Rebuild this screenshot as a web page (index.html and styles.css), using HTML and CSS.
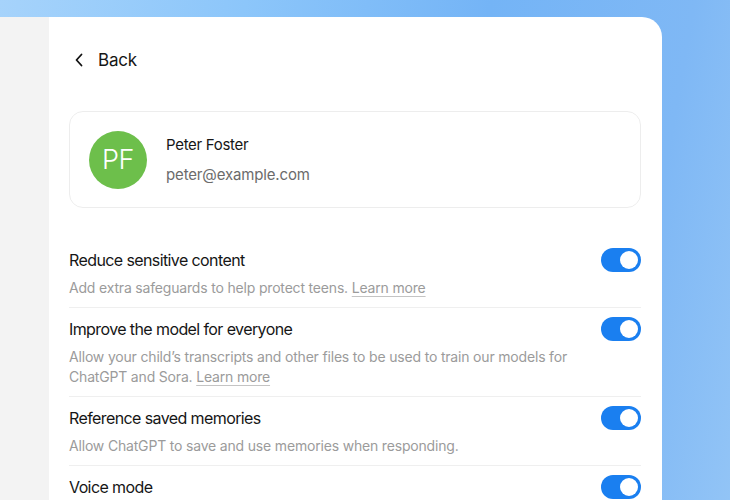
FILE: index.html
```html
<!DOCTYPE html>
<html lang="en">
<head>
<meta charset="utf-8">
<title>Parental controls</title>
<link rel="stylesheet" href="styles.css">
</head>
<body>
<div class="window">
  <aside class="sidebar"></aside>
  <main class="panel">
    <div class="back">
      <svg class="chev" width="10" height="16" viewBox="0 0 10 16"><path d="M7.5 2.5 L2.5 8 L7.5 13.5" fill="none" stroke="#111" stroke-width="1.8" stroke-linecap="round" stroke-linejoin="round"/></svg>
      <span>Back</span>
    </div>
    <section class="card">
      <div class="avatar">PF</div>
      <div class="who">
        <div class="name">Peter Foster</div>
        <div class="email">peter@example.com</div>
      </div>
    </section>
    <div class="settings">
      <div class="row">
        <div class="text">
          <div class="title">Reduce sensitive content</div>
          <div class="desc">Add extra safeguards to help protect teens. <a class="link">Learn more</a></div>
        </div>
        <span class="toggle"><span class="knob"></span></span>
      </div>
      <div class="row">
        <div class="text">
          <div class="title">Improve the model for everyone</div>
          <div class="desc">Allow your child’s transcripts and other files to be used to train our models for ChatGPT and Sora. <a class="link">Learn more</a></div>
        </div>
        <span class="toggle"><span class="knob"></span></span>
      </div>
      <div class="row">
        <div class="text">
          <div class="title">Reference saved memories</div>
          <div class="desc">Allow ChatGPT to save and use memories when responding.</div>
        </div>
        <span class="toggle"><span class="knob"></span></span>
      </div>
      <div class="row">
        <div class="text">
          <div class="title">Voice mode</div>
        </div>
        <span class="toggle"><span class="knob"></span></span>
      </div>
    </div>
  </main>
</div>
</body>
</html>
```
FILE: styles.css
```css
html, body {
  margin: 0;
  height: 100%;
  overflow: hidden;
}
body {
  background: linear-gradient(100deg, #a6d3fb 0%, #8cc6fa 30%, #74b4f6 60%, #7fb8f5 85%, #92c4f6 100%);
  font-family: Inter, "Noto Sans", sans-serif;
  color: #161616;
}
.window {
  margin-top: 17px;
  width: 662px;
  height: 600px;
  display: flex;
  border-radius: 0 20px 0 0;
  overflow: hidden;
  background: #fff;
}
.sidebar {
  width: 49px;
  flex: none;
  background: #f3f3f3;
}
.panel {
  flex: 1;
  padding: 31px 21px 0 20px;
}
.back {
  display: flex;
  align-items: center;
  height: 24px;
  gap: 14px;
  padding-left: 5px;
  font-size: 17px;
  letter-spacing: -0.2px;
}
.chev { display: block; }
.card {
  margin-top: 39px;
  height: 97px;
  box-sizing: border-box;
  border: 1px solid #ededed;
  border-radius: 14px;
  display: flex;
  align-items: center;
  padding-left: 19px;
  gap: 19px;
}
.avatar {
  width: 58px;
  height: 58px;
  border-radius: 50%;
  background: #6dbf4b;
  color: #fff;
  font-size: 27px;
  font-weight: 300;
  display: flex;
  align-items: center;
  justify-content: center;
  letter-spacing: -0.5px;
}
.who { display: flex; flex-direction: column; gap: 8px; padding-top: 1px; }
.name { font-size: 15px; line-height: 22px; color: #161616; letter-spacing: -0.3px; }
.email { font-size: 15px; line-height: 22px; color: #6b6b6b; letter-spacing: -0.15px; }
.settings { margin-top: 31px; }
.row {
  display: flex;
  align-items: flex-start;
  justify-content: space-between;
  padding: 9px 0 9px;
  border-bottom: 1px solid #efefef;
}
.row:last-child { border-bottom: none; }
.text { flex: 1; padding-right: 20px; }
.title {
  font-size: 16px;
  line-height: 24px;
  letter-spacing: -0.6px;
  color: #161616;
}
.desc {
  margin-top: 6px;
  font-size: 14px;
  line-height: 20px;
  color: #9b9b9b;
  letter-spacing: -0.18px;
}
.link {
  text-decoration: underline;
  text-decoration-color: #c4c4c4;
  text-underline-offset: 3px;
}
.toggle {
  flex: none;
  width: 40px;
  height: 24px;
  border-radius: 12px;
  background: #1a7ff0;
  position: relative;
}
.knob {
  position: absolute;
  right: 3px;
  top: 3px;
  width: 18px;
  height: 18px;
  border-radius: 50%;
  background: #fff;
}
```
